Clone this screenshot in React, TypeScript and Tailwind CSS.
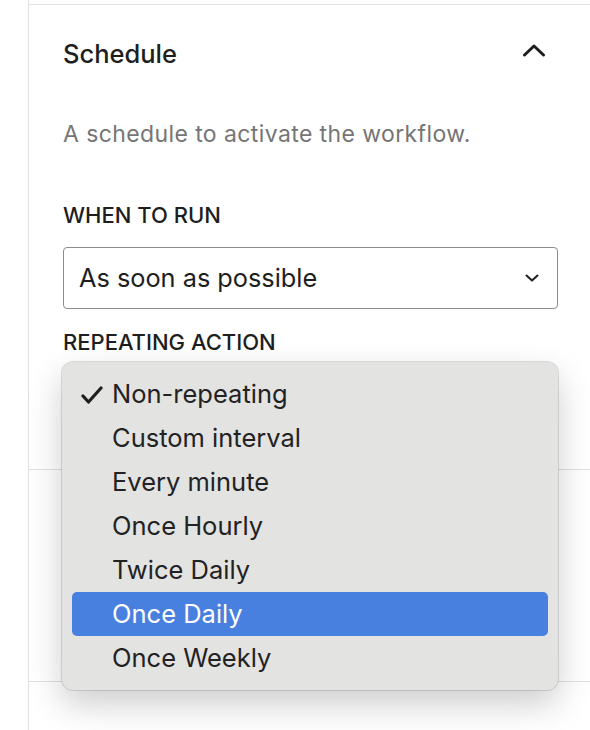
import React from "react";

const items = [
  "Non-repeating",
  "Custom interval",
  "Every minute",
  "Once Hourly",
  "Twice Daily",
  "Once Daily",
  "Once Weekly",
];

export default function App() {
  return (
    <div className="relative w-[590px] h-[730px] overflow-hidden bg-white font-['Inter','Liberation_Sans',sans-serif] text-[#1e1e1e]">
      <div className="ml-[28px] h-full border-l border-[#e0e0e0] pt-[4px]">
        {/* Panel 1 */}
        <div className="border-t border-b border-[#e0e0e0] pl-[34px] pr-[32px] pt-[34px] pb-[33px]">
          <div className="flex items-center justify-between">
            <div className="text-[25.5px] leading-[30px] font-medium">Schedule</div>
            <svg width="24" height="14" viewBox="0 0 24 14" className="mr-[12px] mb-[8px]">
              <path d="M2.5 12 L12 3 L21.5 12" fill="none" stroke="#1e1e1e" strokeWidth="3" strokeLinecap="round" strokeLinejoin="round" />
            </svg>
          </div>
          <div className="mt-[50px] text-[23px] leading-[30px] tracking-[0.4px] text-[#757575]">
            A schedule to activate the workflow.
          </div>
          <div className="mt-[53px] text-[22px] leading-[26px] font-medium uppercase">When to run</div>
          <div className="mt-[19px] h-[62px] rounded-[4px] border-[1.5px] border-[#8c8c8c] flex items-center justify-between pl-[15px] pr-[18px]">
            <span className="text-[25.3px] leading-[30px]">As soon as possible</span>
            <svg width="14" height="8" viewBox="0 0 14 8">
              <path d="M1.5 1.5 L7 6.5 L12.5 1.5" fill="none" stroke="#1e1e1e" strokeWidth="2" strokeLinecap="round" strokeLinejoin="round" />
            </svg>
          </div>
          <div className="mt-[20px] text-[22px] leading-[26px] font-medium uppercase">Repeating action</div>
          <div className="mt-[19px] h-[62px] rounded-[4px] border-[1.5px] border-[#1f5fae]" />
        </div>
        {/* Panel 2 */}
        <div className="h-[212px] border-b border-[#e0e0e0]" />
      </div>

      {/* Native dropdown menu overlay */}
      <div className="absolute left-[62px] top-[362px] w-[496px] rounded-[11px] bg-[#e3e3e2] py-[10px] px-[10px] shadow-[0_14px_34px_rgba(0,0,0,0.2),0_0_0_1px_rgba(0,0,0,0.12)]">
        {items.map((it) => {
          const active = it === "Once Daily";
          return (
            <div
              key={it}
              className={
                active
                  ? "relative h-[44px] rounded-[5px] bg-[#4780df] pl-[40px] flex items-center text-[25.5px] text-white"
                  : "relative h-[44px] rounded-[5px] pl-[40px] flex items-center text-[25.5px] text-[#222222]"
              }
            >
              {it === "Non-repeating" && (
                <svg width="22" height="18" viewBox="0 0 22 18" className="absolute left-[9px] top-[14px]">
                  <path d="M2 10 L7.5 16 L20 2" fill="none" stroke="#1e1e1e" strokeWidth="3.2" strokeLinecap="round" strokeLinejoin="round" />
                </svg>
              )}
              <span className="leading-[30px]">{it}</span>
            </div>
          );
        })}
      </div>
    </div>
  );
}
